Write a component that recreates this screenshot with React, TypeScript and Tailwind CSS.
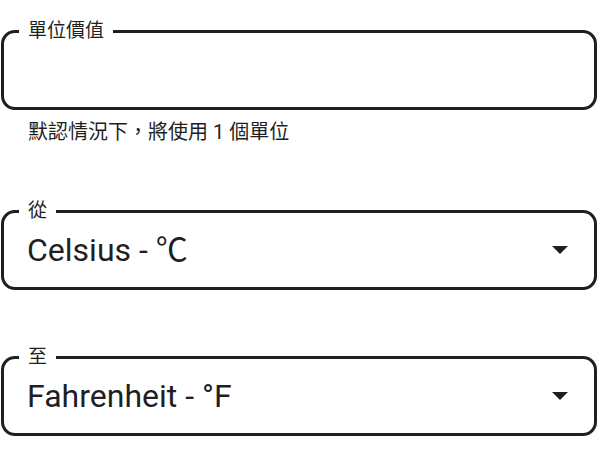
import React from "react";

const font = { fontFamily: 'Roboto, "Noto Sans CJK TC", sans-serif' };

function Caret() {
  return (
    <svg width="16" height="8" viewBox="0 0 16 8" className="shrink-0">
      <path d="M0 0 L16 0 L8 8 Z" fill="#1f1f1f" />
    </svg>
  );
}

function Field({
  label,
  value,
  select = false,
}: {
  label: string;
  value?: string;
  select?: boolean;
}) {
  return (
    <div className="relative h-[80px] w-[596px] rounded-[14px] border-[3px] border-[#1f1f1f]">
      <span className="absolute left-[15px] top-[-14px] bg-white px-[9px] text-[19px] leading-[24px] text-[#1f1f1f]">
        {label}
      </span>
      <div className="flex h-full items-center justify-between pl-[23px] pr-[26px]">
        <span className="text-[32px] leading-[40px] text-[#1f1f1f]">{value}</span>
        {select && <Caret />}
      </div>
    </div>
  );
}

export default function App() {
  return (
    <div className="h-[450px] w-[600px] overflow-hidden bg-white pl-[1px] pt-[30px]" style={font}>
      <Field label="單位價值" />
      <p className="mt-[8px] pl-[27px] text-[20px] leading-[28px] text-[#1f1f1f]">
        默認情況下，將使用 1 個單位
      </p>
      <div className="mt-[64px]">
        <Field label="從" value="Celsius - ℃" select />
      </div>
      <div className="mt-[66px]">
        <Field label="至" value="Fahrenheit - °F" select />
      </div>
    </div>
  );
}
